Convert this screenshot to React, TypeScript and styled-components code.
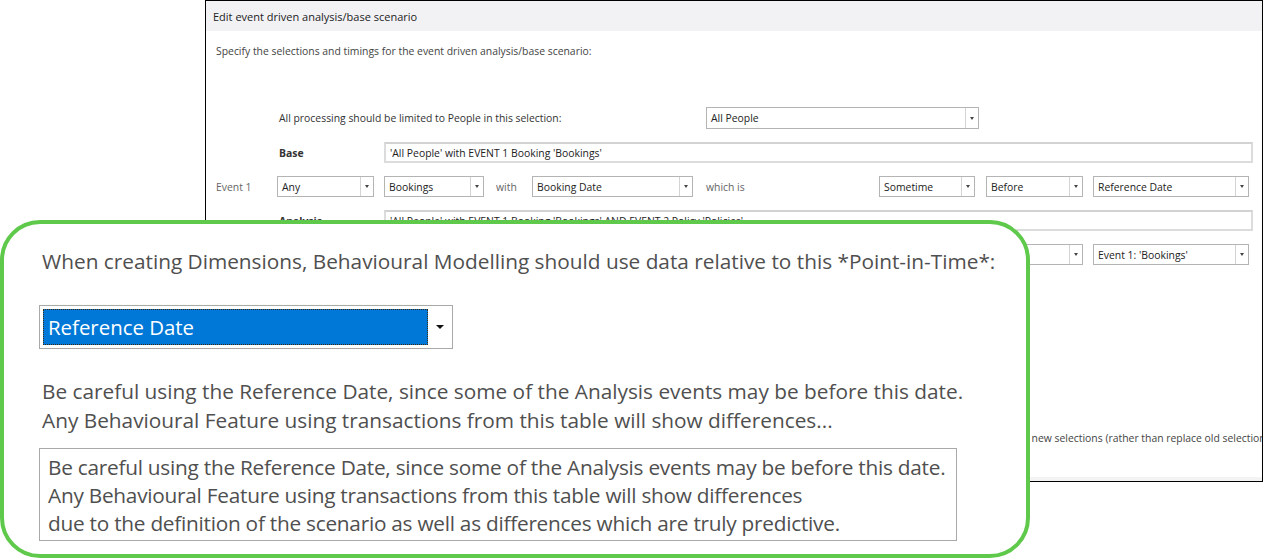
import styled, { createGlobalStyle } from "styled-components";

const GlobalStyle = createGlobalStyle`
  html, body {
    margin: 0;
    padding: 0;
    background: #fff;
  }
  body {
    font-family: "Open Sans", "Noto Sans", sans-serif;
  }
`;

const Page = styled.div`
  position: relative;
  width: 1264px;
  height: 558px;
  overflow: hidden;
  background: #fff;
`;

/* ---------- dialog behind the callout ---------- */

const Window = styled.div`
  margin-left: 205px;
  width: 1058px;
  height: 482px;
  box-sizing: border-box;
  border: 1px solid #000;
  display: flex;
  flex-direction: column;
  overflow: hidden;
  background: #fff;
`;

const TitleBar = styled.div`
  height: 30px;
  flex-shrink: 0;
  background: #f2f2f5;
  display: flex;
  align-items: center;
  padding-left: 7px;
  font-size: 11px;
  color: #222;
`;

const Body = styled.div`
  flex: 1;
  padding: 14px 0 0 10px;
  font-size: 10.4px;
  color: #444;
  display: flex;
  flex-direction: column;
`;

const Intro = styled.div`
  line-height: 13px;
`;

const Form = styled.div`
  margin-top: 49px;
  display: flex;
  flex-direction: column;
  gap: 13px;
`;

const Row = styled.div<{ $h?: number }>`
  display: flex;
  align-items: center;
  height: ${(p) => p.$h ?? 21}px;
  white-space: nowrap;
`;

const Label = styled.span<{ $w: number; $ml?: number; $bold?: boolean; $muted?: boolean }>`
  flex-shrink: 0;
  width: ${(p) => p.$w}px;
  margin-left: ${(p) => p.$ml ?? 0}px;
  padding-left: ${(p) => (p.$ml === undefined ? 0 : 2)}px;
  box-sizing: border-box;
  font-weight: ${(p) => (p.$bold ? 700 : 400)};
  color: ${(p) => (p.$muted ? "#666" : "#333")};
`;

const Field = styled.div<{ $w: number; $ml?: number }>`
  flex-shrink: 0;
  width: ${(p) => p.$w}px;
  margin-left: ${(p) => p.$ml ?? 0}px;
  height: 100%;
  box-sizing: border-box;
  border: 1px solid #b4b4b4;
  background: #fff;
  display: flex;
`;

const TextField = styled(Field)`
  border: 2px solid #dcdcdc;
  border-top-color: #d2d2d2;
`;

const FieldValue = styled.span`
  flex: 1;
  display: flex;
  align-items: center;
  padding-left: 4px;
  color: #222;
  overflow: hidden;
`;

const Arrow = styled.span`
  width: 12px;
  flex-shrink: 0;
  border-left: 1px solid #d4d4d4;
  display: flex;
  align-items: center;
  justify-content: center;

  &::after {
    content: "";
    border-left: 2.5px solid transparent;
    border-right: 2.5px solid transparent;
    border-top: 3px solid #444;
  }
`;

const CheckRow = styled.div<{ $ml: number }>`
  margin-top: 166px;
  margin-left: ${(p) => p.$ml}px;
  display: flex;
  align-items: center;
  gap: 5px;
  white-space: nowrap;
  color: #444;
`;

const Box = styled.span`
  width: 11px;
  height: 11px;
  flex-shrink: 0;
  box-sizing: border-box;
  border: 1px solid #333;
  background: #fff;
`;

const Footer = styled.div`
  height: 4px;
  flex-shrink: 0;
  background: #f3f3f3;
`;

type SelectProps = { w: number; ml?: number; value: string };

function Select({ w, ml, value }: SelectProps) {
  return (
    <Field $w={w} $ml={ml}>
      <FieldValue>{value}</FieldValue>
      <Arrow />
    </Field>
  );
}

/* ---------- enlarged callout ---------- */

const Callout = styled.div`
  position: absolute;
  left: 0;
  top: 220px;
  width: 1030px;
  height: 338px;
  box-sizing: border-box;
  border: 4px solid #5fc94b;
  border-radius: 40px;
  background: #fff;
  padding: 24px 0 0 35px;
  color: #4f4f4f;
  font-size: 20.8px;
  display: flex;
  flex-direction: column;
  align-items: flex-start;
`;

const Heading = styled.div`
  margin-left: 3px;
  line-height: 26px;
  white-space: nowrap;
`;

const BigSelect = styled.div`
  margin-top: 31px;
  width: 414px;
  height: 44px;
  box-sizing: border-box;
  border: 1px solid #a9a9a9;
  background: #fff;
  display: flex;
  padding: 3px 0 3px 3px;
`;

const BigValue = styled.div`
  flex: 1;
  background: #0078d7;
  outline: 1px dotted #3a2a10;
  outline-offset: -1px;
  color: #fff;
  display: flex;
  align-items: center;
  padding-left: 5px;
  font-size: 20.4px;
`;

const BigArrow = styled.div`
  width: 24px;
  display: flex;
  align-items: center;
  justify-content: center;

  &::after {
    content: "";
    border-left: 4.5px solid transparent;
    border-right: 4.5px solid transparent;
    border-top: 4.5px solid #111;
  }
`;

const Note = styled.div`
  margin: 28px 0 0 3px;
  line-height: 29px;
  white-space: nowrap;
`;

const NoteBox = styled.div`
  margin-top: 13px;
  width: 918px;
  height: 93px;
  box-sizing: border-box;
  border: 1px solid #a9a9a9;
  padding: 4px 0 0 8px;
  line-height: 28px;
  letter-spacing: -0.25px;
  white-space: nowrap;
`;

export default function App() {
  return (
    <>
      <GlobalStyle />
      <Page>
        <Window>
          <TitleBar>Edit event driven analysis/base scenario</TitleBar>
          <Body>
            <Intro>Specify the selections and timings for the event driven analysis/base scenario:</Intro>
            <Form>
              <Row $h={22}>
                <Label $w={429} $ml={61}>
                  All processing should be limited to People in this selection:
                </Label>
                <Select w={273} value="All People" />
              </Row>
              <Row>
                <Label $w={107} $ml={61} $bold>
                  Base
                </Label>
                <TextField $w={869}>
                  <FieldValue>'All People' with EVENT 1 Booking 'Bookings'</FieldValue>
                </TextField>
              </Row>
              <Row>
                <Label $w={61} $muted>
                  Event 1
                </Label>
                <Select w={97} value="Any" />
                <Select w={100} ml={10} value="Bookings" />
                <Label $w={38} $ml={10} $muted>
                  with
                </Label>
                <Select w={161} value="Booking Date" />
                <Label $w={175} $ml={11} $muted>
                  which is
                </Label>
                <Select w={96} value="Sometime" />
                <Select w={97} ml={11} value="Before" />
                <Select w={156} ml={10} value="Reference Date" />
              </Row>
              <Row>
                <Label $w={107} $ml={61} $bold>
                  Analysis
                </Label>
                <TextField $w={869}>
                  <FieldValue>'All People' with EVENT 1 Booking 'Bookings' AND EVENT 2 Policy 'Policies'</FieldValue>
                </TextField>
              </Row>
              <Row>
                <Label $w={61} $muted>
                  Event 2
                </Label>
                <Select w={97} value="Any" />
                <Select w={100} ml={10} value="Policies" />
                <Label $w={38} $ml={10} $muted>
                  with
                </Label>
                <Select w={161} value="Policy Date" />
                <Label $w={175} $ml={11} $muted>
                  which is
                </Label>
                <Select w={96} value="Sometime" />
                <Select w={97} ml={11} value="After" />
                <Select w={156} ml={10} value="Event 1: 'Bookings'" />
              </Row>
            </Form>
            <CheckRow $ml={707}>
              <Box />
              <span>Save the results as new selections (rather than replace old selections)</span>
            </CheckRow>
          </Body>
          <Footer />
        </Window>

        <Callout>
          <Heading>
            When creating Dimensions, Behavioural Modelling should use data relative to this *Point-in-Time*:
          </Heading>
          <BigSelect>
            <BigValue>Reference Date</BigValue>
            <BigArrow />
          </BigSelect>
          <Note>
            Be careful using the Reference Date, since some of the Analysis events may be before this date.
            <br />
            Any Behavioural Feature using transactions from this table will show differences...
          </Note>
          <NoteBox>
            Be careful using the Reference Date, since some of the Analysis events may be before this date.
            <br />
            Any Behavioural Feature using transactions from this table will show differences
            <br />
            due to the definition of the scenario as well as differences which are truly predictive.
          </NoteBox>
        </Callout>
      </Page>
    </>
  );
}
